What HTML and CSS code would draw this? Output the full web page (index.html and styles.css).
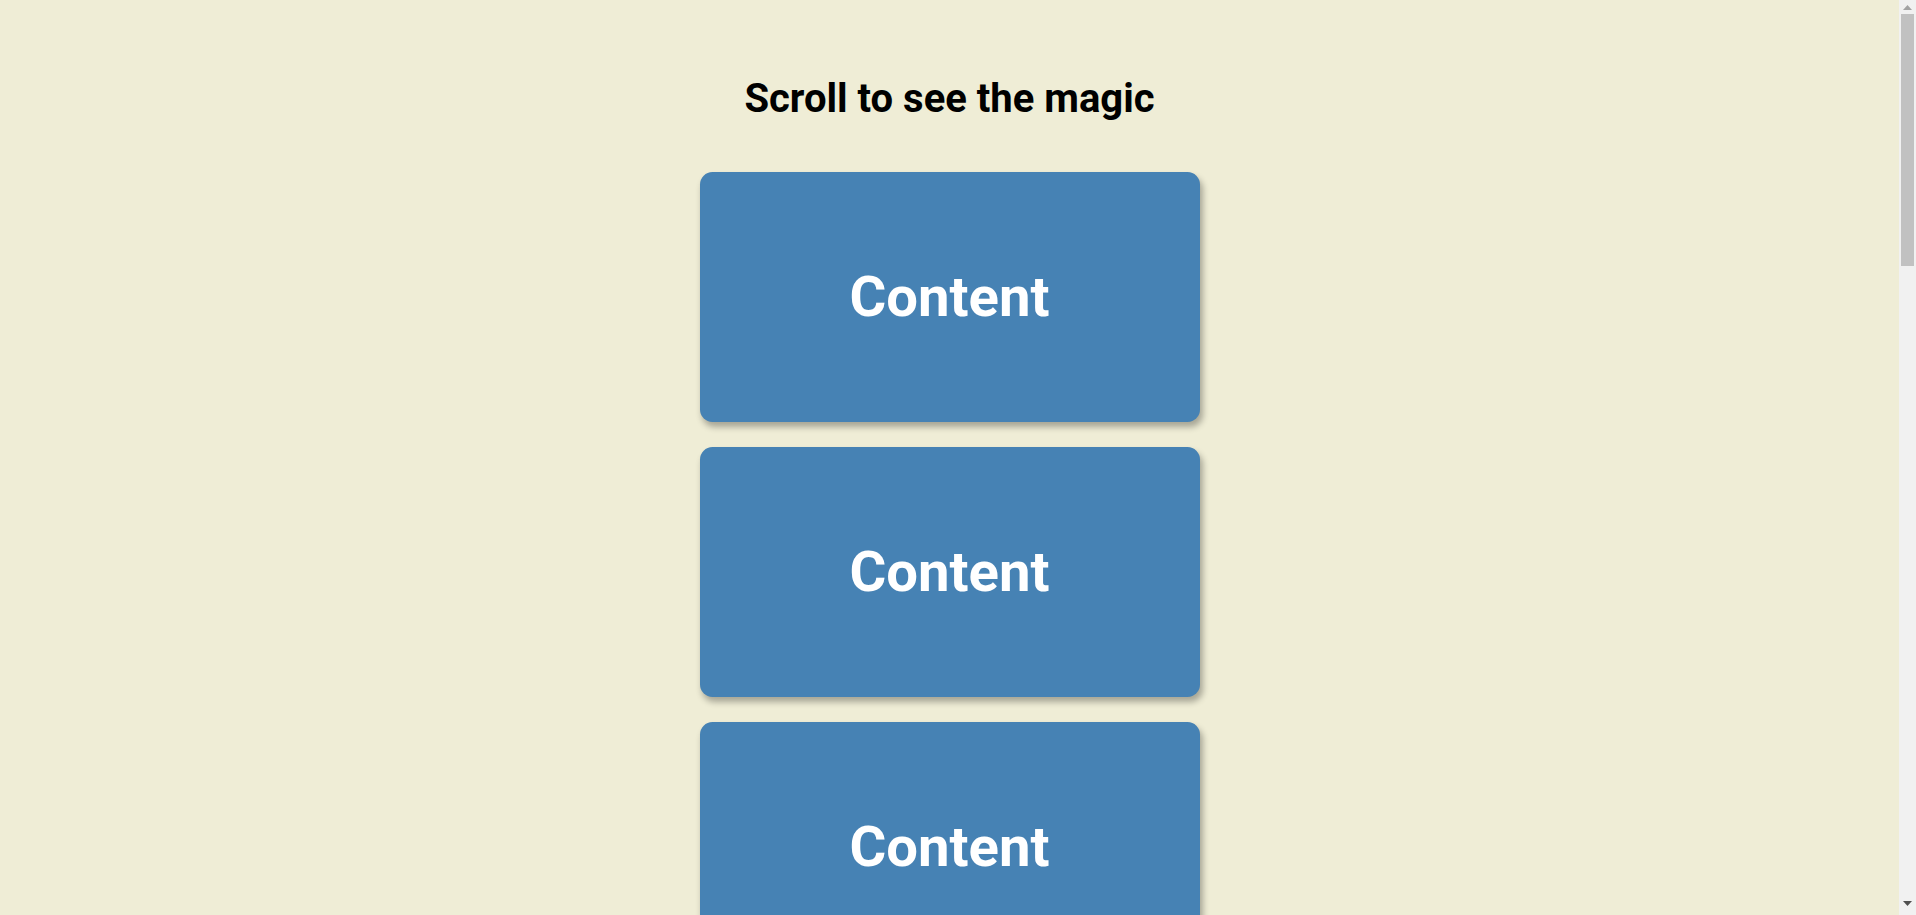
FILE: index.html
```html
<!DOCTYPE html>
<html lang="en">
<head>
<meta charset="UTF-8">
<title>Scroll Animation</title>
<link rel="stylesheet" href="styles.css">
</head>
<body>
  <h1 class="title">Scroll to see the magic</h1>
  <div class="box"><h2 class="box-text">Content</h2></div>
  <div class="box"><h2 class="box-text">Content</h2></div>
  <div class="box"><h2 class="box-text">Content</h2></div>
  <div class="box"><h2 class="box-text">Content</h2></div>
  <div class="box"><h2 class="box-text">Content</h2></div>
  <div class="box"><h2 class="box-text">Content</h2></div>
  <div class="box"><h2 class="box-text">Content</h2></div>
  <div class="box"><h2 class="box-text">Content</h2></div>
  <div class="box"><h2 class="box-text">Content</h2></div>
  <div class="box"><h2 class="box-text">Content</h2></div>
  <div class="box"><h2 class="box-text">Content</h2></div>

  <div class="scrollbar" aria-hidden="true">
    <div class="sb-button">
      <svg width="9" height="5" viewBox="0 0 9 5"><path d="M0 5 L4.5 0 L9 5 Z" fill="#a3a3a3"/></svg>
    </div>
    <div class="sb-thumb"></div>
    <div class="sb-spacer"></div>
    <div class="sb-button sb-button-down">
      <svg width="9" height="5" viewBox="0 0 9 5"><path d="M0 0 L9 0 L4.5 5 Z" fill="#505050"/></svg>
    </div>
  </div>
</body>
</html>
```

FILE: styles.css
```css
* {
  box-sizing: border-box;
}

body {
  background-color: #efedd6;
  font-family: Roboto, "Liberation Sans", sans-serif;
  display: flex;
  flex-direction: column;
  align-items: center;
  margin: 0;
  padding: 75px 17px 62.5px 0;
  overflow-x: hidden;
}

.title {
  font-size: 40px;
  font-weight: 700;
  line-height: normal;
  color: #000;
  margin: 0 0 37.5px;
}

.box {
  background-color: steelblue;
  color: #fff;
  display: flex;
  align-items: center;
  justify-content: center;
  width: 500px;
  height: 250px;
  margin: 12.5px 0;
  border-radius: 12.5px;
  box-shadow: 2.5px 5px 6.25px rgba(0, 0, 0, 0.3);
  flex-shrink: 0;
}

.box-text {
  font-size: 56.25px;
  font-weight: 700;
  margin: 0;
}

.scrollbar {
  position: fixed;
  top: 0;
  right: 0;
  width: 17px;
  height: 100vh;
  background: #f1f1f1;
  display: flex;
  flex-direction: column;
}

.sb-button {
  height: 14px;
  display: flex;
  align-items: center;
  justify-content: center;
  flex-shrink: 0;
}

.sb-button svg {
  display: block;
}

.sb-thumb {
  height: 252px;
  margin: 0 2px;
  background: #c1c1c1;
  flex-shrink: 0;
}

.sb-spacer {
  flex: 1;
}

.sb-button-down {
  height: 24px;
}
```
